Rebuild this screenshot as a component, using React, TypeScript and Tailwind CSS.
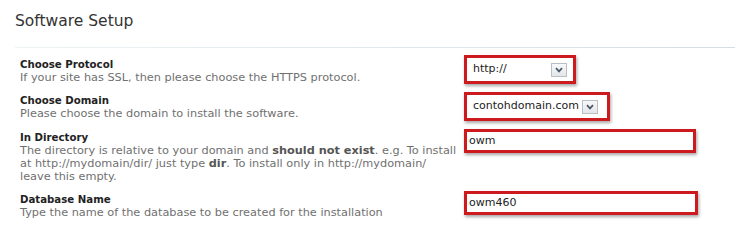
import type { ReactNode } from 'react';

const font = { fontFamily: '"DejaVu Sans", Verdana, sans-serif' };

function Arrow() {
  return (
    <span className="ml-auto flex h-[14px] w-[16px] shrink-0 items-center justify-center border border-[#b9bfc4] bg-gradient-to-b from-[#f7f8f9] to-[#e3e6e9]">
      <svg width="8" height="6" viewBox="0 0 8 6">
        <path d="M1 1.2 L4 4.4 L7 1.2" fill="none" stroke="#4a5866" strokeWidth="1.7" />
      </svg>
    </span>
  );
}

function Highlight({ className, children }: { className: string; children: ReactNode }) {
  return (
    <div className={`border-[3px] border-[#cc1a1f] bg-white shadow-[1px_2px_3px_rgba(0,0,0,0.35)] ${className}`}>
      {children}
    </div>
  );
}

interface RowProps {
  label: string;
  children: ReactNode;
  control: ReactNode;
}

function Row({ label, children, control }: RowProps) {
  return (
    <div className="grid grid-cols-[444px_1fr] pb-[10px]">
      <div className="leading-[13px]">
        <div className="text-[10.2px] font-bold text-[#222]">{label}</div>
        <div className="whitespace-nowrap text-[11.3px] text-[#707070]">{children}</div>
      </div>
      <div>{control}</div>
    </div>
  );
}

export default function App() {
  return (
    <div className="h-[235px] w-[735px] overflow-hidden bg-white" style={font}>
      <h1 className="pl-[15px] pt-[11px] text-[15.5px] leading-[20px] text-[#333]">Software Setup</h1>
      <div className="ml-[15px] mt-[16px] h-px bg-gradient-to-r from-[#eef3f5] to-[#d3dfe5]" />

      <div className="pl-[20px] pt-[10px]">
        <Row
          label="Choose Protocol"
          control={
            <Highlight className="-mt-[3px] h-[29px] w-[112px] px-[6px]">
              <div className="flex h-full items-center text-[11px] text-[#222]">
                <span>http://</span>
                <Arrow />
              </div>
            </Highlight>
          }
        >
          If your site has SSL, then please choose the HTTPS protocol.
        </Row>

        <Row
          label="Choose Domain"
          control={
            <Highlight className="-mt-[2px] h-[29px] w-[146px] pl-[6px] pr-[9px]">
              <div className="flex h-full items-center text-[11px] text-[#222]">
                <span>contohdomain.com</span>
                <Arrow />
              </div>
            </Highlight>
          }
        >
          Please choose the domain to install the software.
        </Row>

        <Row
          label="In Directory"
          control={
            <Highlight className="-mt-[2px] h-[24px] w-[232px] pl-[2px]">
              <div className="flex h-full items-center text-[11px] text-[#222]">owm</div>
            </Highlight>
          }
        >
          The directory is relative to your domain and <b className="text-[#555]">should not exist</b>. e.g. To install
          <br />
          at http://mydomain/dir/ just type <b className="text-[#555]">dir</b>. To install only in http://mydomain/
          <br />
          leave this empty.
        </Row>

        <Row
          label="Database Name"
          control={
            <Highlight className="-mt-[2px] h-[24px] w-[234px] pl-[2px]">
              <div className="flex h-full items-center text-[11px] text-[#222]">owm460</div>
            </Highlight>
          }
        >
          Type the name of the database to be created for the installation
        </Row>
      </div>
    </div>
  );
}
